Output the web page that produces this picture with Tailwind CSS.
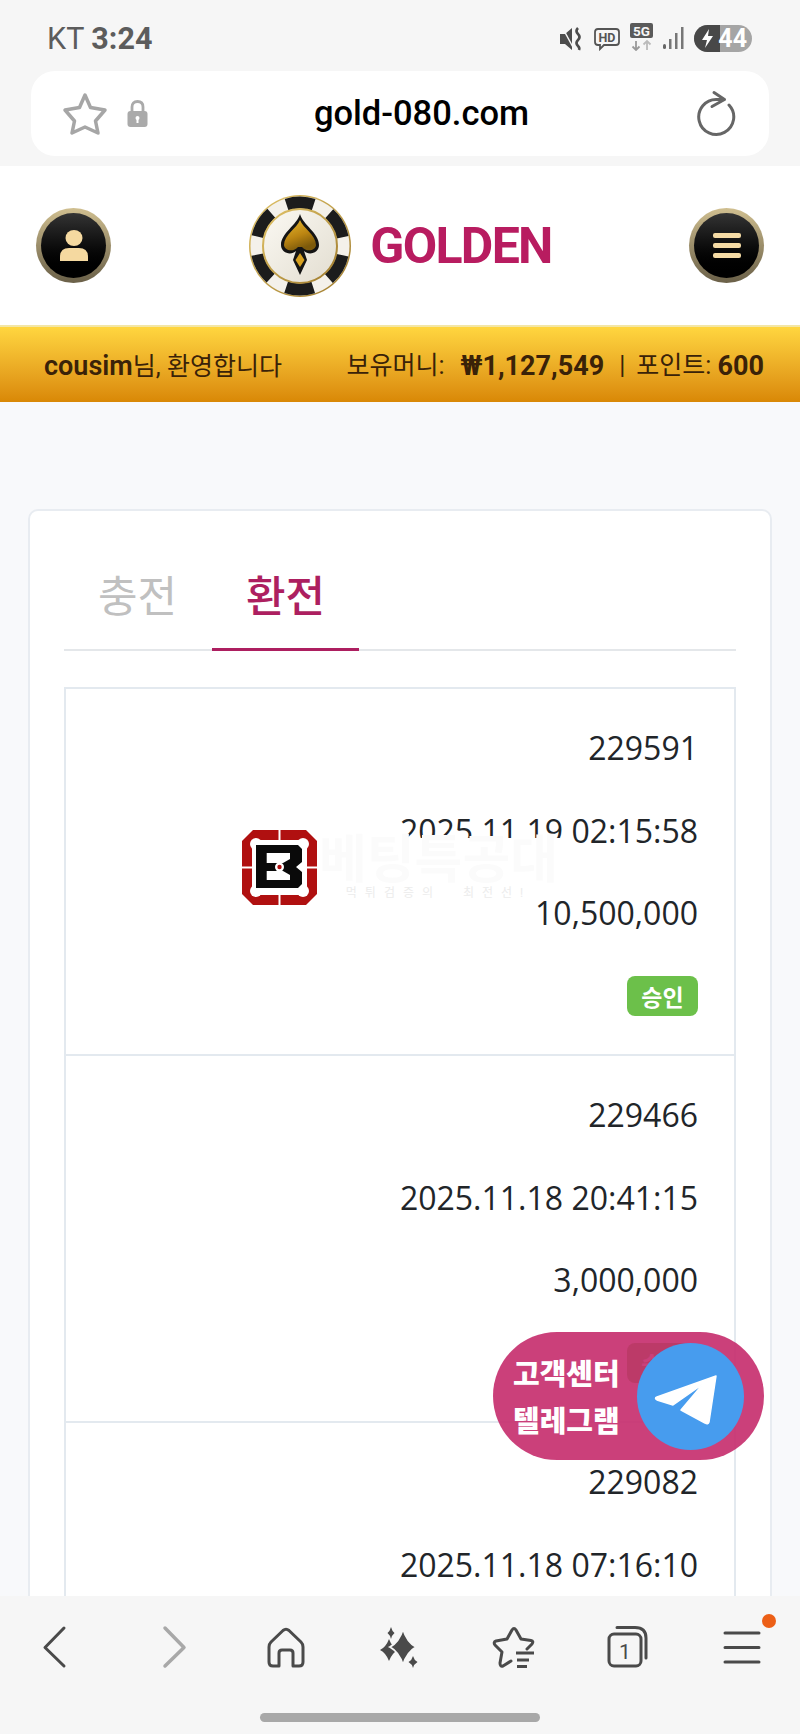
<!DOCTYPE html>
<html lang="ko">
<head>
<meta charset="utf-8">
<script src="https://cdn.jsdelivr.net/npm/@tailwindcss/browser@4"></script>
</head>
<body class="font-['Roboto','Noto_Sans_CJK_KR',sans-serif]">
<div class="relative w-[800px] h-[1734px] overflow-hidden bg-[#f8f9fb] flex flex-col">

  <!-- Browser chrome -->
  <div class="shrink-0 h-[166px] bg-[#f6f6f6] flex flex-col">
    <div class="h-[71px] shrink-0 pl-[47px] pr-[48px] pt-[6px] flex items-center justify-between">
      <div class="text-[30.5px] text-[#5c5c5c]">KT <span class="font-bold">3:24</span></div>
      <div class="flex items-center gap-[10px]">
        <svg class="w-[24px] h-[24px]" viewBox="0 0 24 24"><path d="M0 7 H5 L12 1 V23 L5 17 H0 Z" fill="#4c4c4c"/><path d="M2 0 L14 22" stroke="#f6f6f6" stroke-width="1.500"/><path d="M18 1 Q15 4 18 7 Q21 10 18 13 Q15 16 18 19 Q20 21 19 23" fill="none" stroke="#4c4c4c" stroke-width="2.600"/></svg>
        <svg class="w-[26px] h-[24px]" viewBox="0 0 26 24"><path d="M4 2 H22 Q25 2 25 5 V15 Q25 18 22 18 H10 L6 22 V18 H4 Q1 18 1 15 V5 Q1 2 4 2 Z" fill="none" stroke="#555" stroke-width="1.800"/><text x="13" y="14.500" text-anchor="middle" font-family="Roboto" font-weight="700" font-size="12.500" fill="#555">HD</text></svg>
        <svg class="w-[23px] h-[28px] -mt-[3px]" viewBox="0 0 23 28"><rect x="0" y="0" width="23" height="15" rx="2" fill="#5a5a5a"/><text x="11.500" y="12.500" text-anchor="middle" font-family="Roboto" font-weight="700" font-size="13.500" fill="#f6f6f6">5G</text><path d="M6 18 V27 M2.500 23.500 L6 27 L9.500 23.500" fill="none" stroke="#999" stroke-width="1.800"/><path d="M17 27 V18 M13.500 21.500 L17 18 L20.500 21.500" fill="none" stroke="#bbb" stroke-width="1.800"/></svg>
        <svg class="w-[21px] h-[23px]" viewBox="0 0 21 23"><rect x="0" y="17" width="3" height="5" rx="1.500" fill="#666"/><rect x="6" y="12" width="2.500" height="10" fill="#777"/><rect x="12" y="6" width="2.500" height="16" fill="#777"/><rect x="18" y="0" width="2.500" height="22" fill="#777"/></svg>
        <div class="relative w-[58px] h-[27px] rounded-full overflow-hidden bg-[#a5a5a5] flex items-center justify-end pr-[5px] text-white font-bold text-[25px] leading-none -mt-[1px]">
          <div class="absolute left-0 top-0 bottom-0 w-[26px] bg-[#484848] flex items-center justify-center">
            <svg class="w-[13px] h-[19px]" viewBox="0 0 13 19"><path d="M8 0 L1 11 H6 L4 19 L12 7 H7 Z" fill="#fff"/></svg>
          </div>
          <span class="relative">44</span>
        </div>
      </div>
    </div>
    <div class="mx-[31px] h-[85px] rounded-[24px] bg-white flex items-center shrink-0">
      <svg class="ml-[31px] w-[46px] h-[44px] shrink-0" viewBox="0 0 46 44" fill="none" stroke="#a6a6a6" stroke-width="3.500" stroke-linejoin="round"><path d="M23 3 L28.500 15.500 L43 18 L33.500 29 L36 41 L23 35 L10 41 L12.500 29 L3 18 L17.500 15.500 Z"/></svg>
      <svg class="ml-[19px] w-[21px] h-[27px] shrink-0" viewBox="0 0 21 27"><path d="M5 13 V7 Q5 1.500 10.500 1.500 Q16 1.500 16 7 V13" fill="none" stroke="#aaa" stroke-width="2.800"/><rect x="0.500" y="11" width="20" height="16" rx="3" fill="#aaa"/><circle cx="10.500" cy="18" r="2" fill="#fff"/><rect x="9.500" y="18" width="2" height="5" fill="#fff"/></svg>
      <div class="flex-1 text-center text-[34.5px] font-medium text-black leading-none">gold-080.com</div>
      <svg class="mr-[30px] w-[44px] h-[48px] shrink-0" viewBox="0 0 44 48" fill="none" stroke="#666" stroke-width="3" stroke-linecap="round" stroke-linejoin="round"><path d="M29 9.500 H22 A17.500 17.500 0 1 0 34 15"/><path d="M19 2.500 L29.500 9.500 L17 16.500"/></svg>
    </div>
  </div>

  <!-- Site header -->
  <div class="shrink-0 h-[159px] bg-white flex items-center justify-between px-[36px]">
    <div class="w-[75px] h-[75px] rounded-full p-[5px] bg-gradient-to-b from-[#d0bf90] to-[#6a6048]">
      <div class="w-full h-full rounded-full bg-gradient-to-b from-[#343434] to-black flex flex-col items-center justify-center">
        <svg class="w-[28px] h-[31px]" viewBox="0 0 28 31" fill="#f5d9a0"><ellipse cx="14" cy="8" rx="8.500" ry="8"/><path d="M0 31 V27 Q0 18 9 18 H19 Q28 18 28 27 V31 Z"/></svg>
      </div>
    </div>
    <div class="flex items-center gap-[18px]">
      <svg class="w-[104px] h-[102px]" viewBox="0 0 104 102">
        <defs>
          <linearGradient id="sp" x1="0" y1="0" x2="0.400" y2="1"><stop offset="0" stop-color="#e8b92e"/><stop offset="0.600" stop-color="#bb8512"/><stop offset="1" stop-color="#7d5a0b"/></linearGradient>
          <linearGradient id="cr" x1="0" y1="0" x2="1" y2="1"><stop offset="0" stop-color="#fbf9f3"/><stop offset="1" stop-color="#e2ddd0"/></linearGradient>
          <linearGradient id="rg" x1="0" y1="0" x2="1" y2="1"><stop offset="0" stop-color="#e2c468"/><stop offset="1" stop-color="#9e7a2c"/></linearGradient>
        </defs>
        <circle cx="52" cy="51" r="51" fill="url(#rg)"/>
        <circle cx="52" cy="51" r="49.500" fill="#f4f1ea"/>
        <circle cx="52" cy="51" r="43.500" fill="none" stroke="#1c1c1c" stroke-width="12" stroke-dasharray="27.500 18.050" transform="rotate(-108 52 51)"/>
        <circle cx="52" cy="51" r="37" fill="url(#cr)" stroke="url(#rg)" stroke-width="2"/>
        <path d="M52 19 C55 30 71 38 71 50 C71 58 61 61 56 56 L59 65 L52 80 L45 65 L48 56 C43 61 33 58 33 50 C33 38 49 30 52 19 Z" fill="#141414"/>
        <path d="M52 25 C55 33 68 40 68 50 C68 55 59 58 54 52 L50 52 C45 58 36 55 36 50 C36 40 49 33 52 25 Z" fill="url(#sp)"/>
        <path d="M52 58 L56.500 65 L52 72 L47.500 65 Z" fill="#d6a020"/>
      </svg>
      <div class="text-[50px] font-bold tracking-[-1.7px] text-[#b81c60] leading-none">GOLDEN</div>
    </div>
    <div class="w-[75px] h-[75px] rounded-full p-[5px] bg-gradient-to-b from-[#d0bf90] to-[#6a6048]">
      <div class="w-full h-full rounded-full bg-gradient-to-b from-[#343434] to-black flex flex-col items-center justify-center gap-[5px]">
        <div class="w-[28px] h-[5px] rounded-[2px] bg-[#f5dba5]"></div>
        <div class="w-[28px] h-[5px] rounded-[2px] bg-[#f5dba5]"></div>
        <div class="w-[28px] h-[5px] rounded-[2px] bg-[#f5dba5]"></div>
      </div>
    </div>
  </div>

  <!-- Gold member bar -->
  <div class="shrink-0 h-[77px] border-t-[2px] border-[#f3e6a6] bg-gradient-to-b from-[#ffd63f] to-[#d98805] flex items-center justify-between pl-[44px] pr-[36px] pt-[3px] text-[#3a2208] text-[25px]">
    <div><span class="font-semibold text-[27px]">cousim</span>님, 환영합니다</div>
    <div class="flex items-center whitespace-pre"><span>보유머니:</span><span class="font-bold text-[27px] ml-[16px]">₩1,127,549</span><span class="ml-[15px]">|</span><span class="ml-[11px]">포인트: </span><span class="font-bold text-[27px]">600</span></div>
  </div>

  <!-- Main -->
  <div class="flex-1 min-h-0 overflow-hidden pt-[107px] px-[28px]">
    <div class="bg-white border-2 border-[#e8ecf1] rounded-[10px] pt-[35px] px-[34px] h-[1400px]">
      <div class="flex gap-[1px] border-b-2 border-[#e4e7ea] h-[105px]">
        <div class="w-[147px] h-[103px] flex items-center justify-center text-[43px] text-[#c0c0c0]">충전</div>
        <div class="w-[147px] h-[105px] border-b-[3px] border-[#ad1f60] flex items-center justify-center text-[43px] font-medium text-[#ad1f60]">환전</div>
      </div>
      <div class="mt-[36px] border-2 border-[#e3e9ef] font-['Open_Sans','Noto_Sans_CJK_KR',sans-serif] text-[32px] text-[#212529]">
        <div class="h-[367px] border-b-2 border-[#e3e9ef] pt-[18px] pr-[36px] flex flex-col items-end">
          <div class="h-[82.5px] flex items-center">229591</div>
          <div class="h-[82.5px] flex items-center">2025.11.19 02:15:58</div>
          <div class="h-[82.5px] flex items-center">10,500,000</div>
          <div class="h-[82.5px] flex items-center"><span class="w-[71px] h-[40px] rounded-[8px] bg-[#6cc04a] text-white text-[23px] font-bold flex items-center justify-center font-['Noto_Sans_CJK_KR',sans-serif]">승인</span></div>
        </div>
        <div class="h-[367px] border-b-2 border-[#e3e9ef] pt-[18px] pr-[36px] flex flex-col items-end">
          <div class="h-[82.5px] flex items-center">229466</div>
          <div class="h-[82.5px] flex items-center">2025.11.18 20:41:15</div>
          <div class="h-[82.5px] flex items-center">3,000,000</div>
          <div class="h-[82.5px] flex items-center"><span class="w-[71px] h-[40px] rounded-[8px] bg-[#6cc04a] text-white text-[23px] font-bold flex items-center justify-center font-['Noto_Sans_CJK_KR',sans-serif]">승인</span></div>
        </div>
        <div class="h-[367px] pt-[18px] pr-[36px] flex flex-col items-end">
          <div class="h-[82.5px] flex items-center">229082</div>
          <div class="h-[82.5px] flex items-center">2025.11.18 07:16:10</div>
        </div>
      </div>
    </div>
  </div>

  <!-- Bottom browser nav -->
  <div class="shrink-0 h-[138px] bg-[#f6f6f6] flex flex-col items-center">
    <div class="flex w-[798px] pt-[27px] h-[117px]">
      <div class="w-[114px] flex justify-center pr-[8px]"><svg class="w-[48px] h-[48px]" viewBox="0 0 48 48" fill="none" stroke="#4a4a4a" stroke-width="3" stroke-linecap="round" stroke-linejoin="round"><path d="M34 5 L15 24.500 L34 43"/></svg></div>
      <div class="w-[114px] flex justify-center pl-[4px]"><svg class="w-[48px] h-[48px]" viewBox="0 0 48 48" fill="none" stroke="#a8a8a8" stroke-width="3.500" stroke-linecap="round" stroke-linejoin="round"><path d="M15 5 L34 24.500 L15 43"/></svg></div>
      <div class="w-[114px] flex justify-center"><svg class="w-[48px] h-[48px]" viewBox="0 0 48 48" fill="none" stroke="#4a4a4a" stroke-width="3" stroke-linejoin="round"><path d="M9 19 L21 7.500 Q24 5 27 7.500 L39 19 Q41 21 41 24 V39 Q41 43 37 43 H31 V30 Q31 27 28 27 H20 Q17 27 17 30 V43 H11 Q7 43 7 39 V24 Q7 21 9 19 Z"/></svg></div>
      <div class="w-[114px] flex justify-center pl-[4px]"><svg class="w-[48px] h-[48px]" viewBox="0 0 48 48" fill="#4a4a4a">
        <path d="M13 4 Q14 8 16.500 10 Q14 12 13 16 Q12 12 9.500 10 Q12 8 13 4 Z"/>
        <path d="M11 16 Q14 24 20 27 Q14 30 11 38 Q8 30 2 27 Q8 24 11 16 Z"/>
        <path d="M25 6 Q29 19 38 24 Q29 29 25 42 Q21 29 12 24 Q21 19 25 6 Z" stroke="#f6f6f6" stroke-width="2"/>
        <path d="M35 33 Q36 37 39.500 39 Q36 41 35 45 Q34 41 30.500 39 Q34 37 35 33 Z"/>
      </svg></div>
      <div class="w-[114px] flex justify-center"><svg class="w-[48px] h-[48px]" viewBox="0 0 48 48" fill="none" stroke="#4a4a4a" stroke-width="3" stroke-linecap="round" stroke-linejoin="round"><path d="M37 26 L42 21 Q44 18 41 17.500 L31 16 L26 7 Q24 4 22 7 L17 16 L6 18 Q3 19 5 22 L12 29 L10 40 Q10 44 13 43 L21 38"/><path d="M26 30 H44 M27 37 H39 M27 43.500 H37" stroke-linecap="butt"/></svg></div>
      <div class="w-[114px] flex justify-center"><svg class="w-[48px] h-[48px]" viewBox="0 0 48 48" fill="none" stroke="#4a4a4a" stroke-width="3" stroke-linecap="round"><rect x="5" y="11" width="32" height="32" rx="5"/><path d="M13 4.500 H31 Q42 4.500 42 15 V35"/><text x="21" y="36" text-anchor="middle" font-family="Roboto" font-size="21" fill="#4a4a4a" stroke="none">1</text></svg></div>
      <div class="relative w-[114px] flex justify-center">
        <svg class="w-[48px] h-[48px]" viewBox="0 0 48 48" fill="none" stroke="#4a4a4a" stroke-width="3" stroke-linecap="round"><path d="M7 10 H41 M7 24.500 H41 M7 39 H41"/></svg>
        <span class="absolute left-[77px] top-[-9px] w-[14px] h-[14px] rounded-full bg-[#ec5f16]"></span>
      </div>
    </div>
    <div class="w-[280px] h-[9px] rounded-full bg-[#a8a8a8]"></div>
  </div>

  <!-- Watermark overlay -->
  <div class="absolute left-[242px] top-[830px] w-[320px] h-[75px] flex items-start">
    <svg class="w-[75px] h-[75px] shrink-0" viewBox="0 0 75 75">
      <path d="M11 0 H64 L75 11 V64 L64 75 H11 L0 64 V11 Z" fill="#b01010"/>
      <rect x="10" y="10" width="55" height="55" rx="6" fill="#fff"/>
      <circle cx="14" cy="14" r="6" fill="#fff"/><circle cx="61" cy="14" r="6" fill="#fff"/><circle cx="14" cy="61" r="6" fill="#fff"/><circle cx="61" cy="61" r="6" fill="#fff"/>
      <path d="M36.500 0 H38.500 V75 H36.500 Z M0 36.500 H75 V38.500 H0 Z" fill="#fff"/>
      <path d="M14 15 H56 L60 19 V32 L54 37 L60 42 V54 L56 58 H14 Z" fill="#0a0a0a"/>
      <path d="M24.700 23 H48 V29 L41 33 H24.700 Z M24.700 41 H41 L48 45 V50 H24.700 Z" fill="#fff"/>
      <circle cx="37.500" cy="37" r="4.500" fill="#fff"/>
      <circle cx="37.500" cy="37" r="2.200" fill="#b01010"/>
    </svg>
    <div class="w-[243px] h-[62px] mt-[8px] bg-white flex flex-col items-center leading-none">
      <div class="text-[52px] font-bold text-[#fbfbfb] leading-none -mt-[3px]">베팅특공대</div>
      <div class="text-[12px] text-[#ececec] tracking-[8px] whitespace-pre">먹튀검증의  최전선!</div>
    </div>
  </div>

  <!-- Floating telegram button -->
  <div class="absolute left-[493px] top-[1332px] w-[271px] h-[128px] rounded-full bg-[#c52b6c]/90 flex items-center pl-[20px] pr-[20px] justify-between">
    <div class="text-white text-[29px] font-black leading-[47px] font-['Noto_Sans_CJK_KR',sans-serif]">고객센터<br>텔레그램</div>
    <div class="w-[107px] h-[107px] rounded-full bg-[#479cee] shrink-0">
      <svg class="w-[107px] h-[107px]" viewBox="0 0 107 107"><path d="M79 33 L72 79 Q71 82 68 80 L44 67 L66 41 L36 62 L20 57 Q17 55 20 54 Z" fill="#fff" stroke="#fff" stroke-width="1.500" stroke-linejoin="round"/></svg>
    </div>
  </div>
</div>
</body>
</html>
